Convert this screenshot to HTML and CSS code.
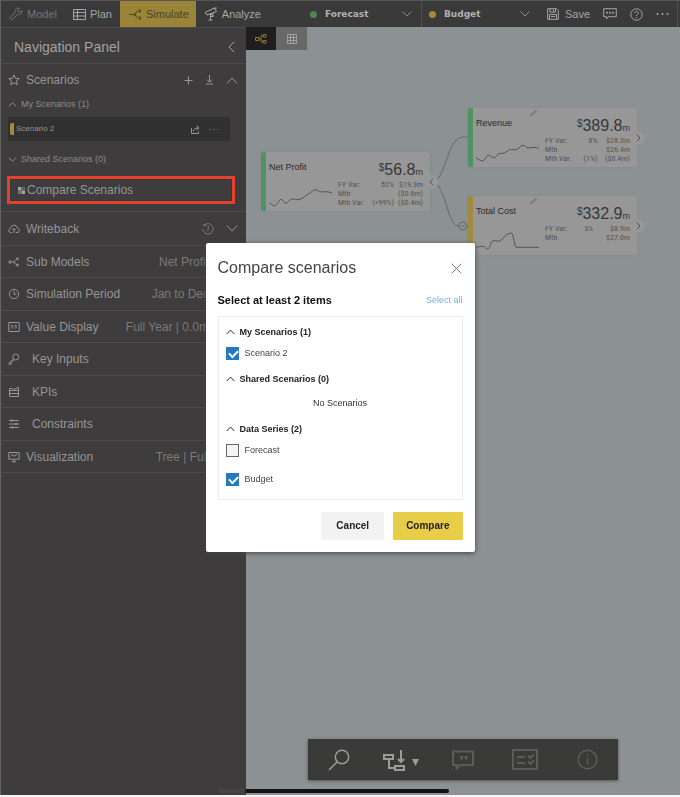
FILE: index.html
```html
<!DOCTYPE html>
<html lang="en">
<head>
<meta charset="utf-8">
<meta name="viewport" content="width=device-width, initial-scale=1">
<title>Compare scenarios</title>
<link rel="stylesheet" href="styles.css">
</head>
<body>
<div class="app">
  <header class="topbar">
    <nav class="modes">
      <button class="mode mode-muted"><svg class="icon" width="14" height="14" viewBox="0 0 14 14"><path d="M12.8 3.500 10.800 5.300 9 4.800 8.600 3.100 10.400 1.200C8.500.300 6.300 1.700 6.200 3.700c0 .6.1 1 .2 1.500L1.400 10c-1.200 1.200.9 3.500 2.300 2.200L8.600 7.500c2.700.8 4.800-1.500 4.200-4z"/></svg>Model</button>
      <button class="mode"><svg class="icon" width="13" height="13" viewBox="0 0 13 13"><path d="M.5 1.500h12v10H.5zM.5 4.500h12M.5 8h12M4.500 1.500v10"/></svg>Plan</button>
      <button class="mode mode-active"><svg class="icon" width="13" height="13" viewBox="0 0 13 13"><path d="M0 6.500h4.500M12 3H9.500C5.500 3 5.500 10 9.500 10H12M10 1l2 2-2 2M10 8l2 2-2 2"/><circle cx="5.500" cy="6.500" r="1"/></svg>Simulate</button>
      <button class="mode"><svg class="icon" width="14" height="14" viewBox="0 0 14 14"><path d="M1 5.500 10.500 1l2 3.500L3 8zM10 1.200l2.800-.2M6.500 7v6M4.500 13h4M6.500 6.500l3 3M9 6v3.500H6"/></svg>Analyze</button>
    </nav>
    <div class="series">
      <label class="pick"><span class="dot dot-green"></span>
        <select aria-label="Primary series"><option>Forecast</option></select>
        <svg class="icon" width="10" height="6" viewBox="0 0 10 6"><path d="m.5.5 4.500 4.500L9.500.500"/></svg></label>
      <label class="pick"><span class="dot dot-gold"></span>
        <select aria-label="Comparison series"><option>Budget</option></select>
        <svg class="icon" width="10" height="6" viewBox="0 0 10 6"><path d="m.5.5 4.500 4.500L9.500.500"/></svg></label>
    </div>
    <div class="tools">
      <button class="tool"><svg class="icon" width="12" height="12" viewBox="0 0 12 12"><path d="M.7.7h8.800l1.800 1.800v8.800H.7zM3 .7v3.500h5.500V.7M6.500 1.500v2M2.500 11.300V6.500h7v4.800M4 8.500h4"/></svg>Save</button>
      <button class="tool" aria-label="Comments"><svg class="icon" width="14" height="12" viewBox="0 0 14 12"><path d="M.7.7h12.600v8H5.500L3.500 11V8.700H.7z"/><path class="round-dots" d="M4 4.700h.01M7 4.700h.01M10 4.700h.01"/></svg></button>
      <button class="tool" aria-label="Help"><svg class="icon" width="13" height="13" viewBox="0 0 13 13"><circle cx="6.500" cy="6.500" r="5.700"/><path d="M4.700 5.200c0-2.400 3.700-2.200 3.600 0C8.300 6.500 6.500 6.400 6.500 8M6.500 9v1"/></svg></button>
      <button class="tool" aria-label="More"><svg class="icon" width="13" height="4" viewBox="0 0 13 4"><path class="round-dots" d="M1.500 2h.01M6.500 2h.01M11.500 2h.01"/></svg></button>
    </div>
  </header>

  <div class="workspace">
    <aside class="sidebar">
      <div class="panel-head">
        <h1>Navigation Panel</h1>
        <button aria-label="Collapse panel"><svg class="icon" width="7" height="12" viewBox="0 0 7 12"><path d="M6.200.8 1 6l5.200 5.200"/></svg></button>
      </div>

      <section class="scenarios">
        <div class="scenarios-head">
          <svg class="icon" width="12" height="12" viewBox="0 0 12 12"><path d="m6 .9 1.500 3.400 3.700.3-2.800 2.400.9 3.700L6 8.800l-3.300 1.900.9-3.700L.8 4.600l3.700-.3z"/></svg>
          <h2>Scenarios</h2>
          <button aria-label="Add scenario"><svg class="icon" width="9" height="9" viewBox="0 0 9 9"><path d="M4.500.5v8M.5 4.500h8"/></svg></button>
          <button aria-label="Import scenario"><svg class="icon" width="9" height="10" viewBox="0 0 9 10"><path d="M4.500 0v7M2 4.700l2.500 2.500L7 4.700M1 9h7"/></svg></button>
          <button aria-label="Collapse scenarios"><svg class="icon" width="12" height="7" viewBox="0 0 12 7"><path d="M1 6.300 6 1l5 5.300"/></svg></button>
        </div>
        <button class="group"><svg class="icon" width="9" height="5" viewBox="0 0 9 5"><path d="M.8 4.300 4.500.7l3.700 3.600"/></svg>My Scenarios (1)</button>
        <div class="scenario">
          <span class="scenario-name">Scenario 2</span>
          <button aria-label="Share"><svg class="icon" width="10" height="9" viewBox="0 0 10 9"><path d="M1.500 3v5.500h7V6.500M3.500 6.500C3.700 4 5 3 8 3M6.500.8 9 3 6.500 5.200"/></svg></button>
          <button aria-label="Scenario menu"><svg class="icon" width="10" height="3" viewBox="0 0 10 3"><path class="small-dots" d="M1 1.500h.01M5 1.500h.01M9 1.500h.01"/></svg></button>
        </div>
        <button class="group"><svg class="icon" width="9" height="5" viewBox="0 0 9 5"><path d="M.8.7l3.700 3.600L8.200.7"/></svg>Shared Scenarios (0)</button>
        <button class="compare-link"><svg width="7" height="7" viewBox="0 0 7 7"><path fill="#706e6e" d="M0 0h7v7H0z"/><path fill="#a5a3a3" d="M0 0h3v3H0zM4 4h3v3H4z"/><path stroke="#4b4949" d="M4 1.500h2"/></svg>Compare Scenarios</button>
      </section>

      <div class="writeback">
        <svg class="icon" width="12" height="10" viewBox="0 0 12 10"><path d="M4 8.500H3C0 8.500.2 4.600 2.600 4.500 3 .2 8.800.2 9.100 4c3 .3 2.800 4.500 0 4.500H8M6 9V4.500M4.500 6 6 4.500 7.500 6"/></svg>
        <h2>Writeback</h2>
        <button aria-label="History"><svg class="icon dim" width="12" height="12" viewBox="0 0 12 12"><path d="M2 2.500A5.200 5.200 0 1 1 .8 6M1.700.8 2 2.800l2-.3M6.300 3v3.500L4.500 8"/></svg></button>
        <button aria-label="Expand writeback"><svg class="icon" width="12" height="7" viewBox="0 0 12 7"><path d="M1 .7 6 6l5-5.300"/></svg></button>
      </div>

      <ul class="settings">
        <li><svg class="icon" width="12" height="12" viewBox="0 0 12 12"><path d="M3.500 6h2c2 0 1-3 4-3M5.500 6c2 0 1 3 4 3"/><circle cx="2" cy="6" r="1.200"/><circle cx="9.500" cy="2.700" r="1"/><circle cx="9.500" cy="9" r="1"/></svg><h2>Sub Models</h2><span>Net Profit</span></li>
        <li><svg class="icon" width="12" height="12" viewBox="0 0 12 12"><circle cx="6" cy="6" r="4.700"/><path d="M6 3v3.200h2.500"/></svg><h2>Simulation Period</h2><span>Jan to Dec</span></li>
        <li><svg class="icon" width="12" height="12" viewBox="0 0 12 12"><path d="M.8 1.500h10.400v9H.8zM3.200 4.500l.8-.5v3.500M7.200 4.500 8 4v3.500M6 4.500v.7M6 6.500v.7"/></svg><h2>Value Display</h2><span>Full Year | 0.0m</span></li>
        <li class="indented"><svg class="icon" width="12" height="12" viewBox="0 0 12 12"><circle cx="7.800" cy="4" r="3"/><path d="M5.500 6 1 10v1.300h2M6 6.800 3 9.800v1.500"/></svg><h2>Key Inputs</h2></li>
        <li class="indented"><svg class="icon" width="12" height="12" viewBox="0 0 12 12"><path d="M1.500 4.500h9v6h-9zM1.500 7.500h9M1.500 4.500v-2h3l1 1 5-2v3"/></svg><h2>KPIs</h2></li>
        <li class="indented"><svg class="icon" width="12" height="12" viewBox="0 0 12 12"><path d="M1 2.500h10M1 6h10M1 9.500h10M4 1.200v2.600M8 4.700v2.600M4.500 8.200v2.600"/></svg><h2>Constraints</h2></li>
        <li><svg class="icon" width="12" height="12" viewBox="0 0 12 12"><path d="M.8 1.500h10.400v6.700H.8zM4 10.700h4M6 8.200v2.500M2.500 5.500l2-2L6 5.300l3.500-2.200"/></svg><h2>Visualization</h2><span>Tree | Full</span></li>
      </ul>
    </aside>

    <main class="canvas">
      <div class="views">
        <button class="view view-on" aria-label="Tree view"><svg width="12" height="10" viewBox="0 0 12 10" fill="none" stroke="#8f7d30"><path d="M.5 3.500h3.500v3H.500zM8 .5h3v2.500H8zM8 6.500h3V9H8zM4 5h2M8 1.700H6v6h2"/></svg></button>
        <button class="view" aria-label="Grid view"><svg width="10" height="10" viewBox="0 0 10 10" fill="none" stroke="#a0a0a0"><path d="M.5.5h9v9h-9zM.5 3.500h9M.5 6.500h9M3.500.5v9M6.500.5v9"/></svg></button>
      </div>

      <svg class="links" width="60" height="110" viewBox="0 0 60 110" fill="none" stroke="#66696a"><path d="M8 54C20 41 20 10 36 10h8M8 56c12 14 12 43 23 43M39 99h4"/><circle cx="35" cy="99" r="4"/><path d="M33 99h4"/></svg>

      <article class="node node-profit">
        <div class="node-head"><h3>Net Profit</h3><p class="amount"><sup>$</sup>56.8<small>m</small></p></div>
        <div class="node-body">
          <svg class="spark" width="64" height="19" viewBox="0 0 64 19"><path d="M0 14.300C2 16 4 18 6 17.700S10 11.300 12 11.300 15 15.300 17 15.300 20 11.300 23 11 28 12 30 11.700 36 8 39 6.300 44 2 46 1.700 50 4 52 4 56 3.500 58 3.700 62 4.700 63 5"/></svg>
          <table>
            <tr><th>FY Var:</th><td>52%</td><td>$19.3m</td></tr>
            <tr><th>Mth</th><td></td><td>($0.6m)</td></tr>
            <tr><th>Mth Var:</th><td>(&gt;99%)</td><td>($0.4m)</td></tr>
          </table>
        </div>
        <button class="toggle" aria-label="Collapse Net Profit"><svg width="5" height="8" viewBox="0 0 5 8"><path d="M4 .8 1 4l3 3.200"/></svg></button>
      </article>

      <article class="node node-revenue">
        <svg class="pencil" width="9" height="8" viewBox="0 0 9 8"><path d="m1.500 6.500 6-5"/></svg>
        <div class="node-head"><h3>Revenue</h3><p class="amount"><sup>$</sup>389.8<small>m</small></p></div>
        <div class="node-body">
          <svg class="spark" width="64" height="19" viewBox="0 0 64 19"><path d="M0 14C2 15 5 17.300 7 17S10 11.500 12 11.300 16 13.700 18 13.700 21 10 23 9.700 26 9.500 28 9 32 6 34 5.700 39 6 41 5.300 45 1.300 47 1.300 50 4 52 4 57 3.300 59 3.300 62 4 63 4.700"/></svg>
          <table>
            <tr><th>FY Var:</th><td>8%</td><td>$28.3m</td></tr>
            <tr><th>Mth</th><td></td><td>$26.4m</td></tr>
            <tr><th>Mth Var:</th><td>(1%)</td><td>($0.4m)</td></tr>
          </table>
        </div>
        <button class="toggle" aria-label="Expand Revenue"><svg width="5" height="8" viewBox="0 0 5 8"><path d="m1 .8 3 3.200-3 3.200"/></svg></button>
      </article>

      <article class="node node-cost">
        <svg class="pencil" width="9" height="8" viewBox="0 0 9 8"><path d="m1.500 6.500 6-5"/></svg>
        <div class="node-head"><h3>Total Cost</h3><p class="amount"><sup>$</sup>332.9<small>m</small></p></div>
        <div class="node-body">
          <svg class="spark" width="64" height="19" viewBox="0 0 64 19"><path d="M0 15.300C2 15 5 14 7 14.300S10 17.300 12 17 15 9 17 8.700 22 9.500 24 9 29 3 31 2.300 35 .8 36 1.300 39 15.300 40 15.300H63"/></svg>
          <table>
            <tr><th>FY Var:</th><td>3%</td><td>$8.9m</td></tr>
            <tr><th>Mth</th><td></td><td>$27.0m</td></tr>
          </table>
        </div>
        <button class="toggle" aria-label="Expand Total Cost"><svg width="5" height="8" viewBox="0 0 5 8"><path d="m1 .8 3 3.200-3 3.200"/></svg></button>
      </article>

      <div class="dock">
        <button aria-label="Search"><svg class="thin" width="22" height="22" viewBox="0 0 22 22"><circle cx="14" cy="8" r="6.700"/><path d="M9.200 12.800 1 21"/></svg></button>
        <button aria-label="Insert node"><svg width="36" height="22" viewBox="0 0 36 22"><path d="M1 6h9v4H1zM12 17h9v4h-9zM6 10v9h6M18 1v12M15 10l3 3 3-3"/><path class="caret" d="M29 10h7l-3.500 7z"/></svg></button>
        <button class="off" aria-label="Quote"><svg width="22" height="20" viewBox="0 0 22 20"><path d="M1 1.500h20V15H8l-3.500 3.500V15H1z"/><path d="M8 7h2v1l-.8 1.500M12.500 7h2v1l-.8 1.500"/></svg></button>
        <button class="off" aria-label="Checklist"><svg width="26" height="21" viewBox="0 0 26 21"><path d="M1 1h24v19H1zM5 8h8M5 14h8M16 6.500l2.500 2.500L22 5.500M16 12.500l2.500 2.500L22 11.500"/></svg></button>
        <button class="off" aria-label="Information"><svg class="thin" width="21" height="21" viewBox="0 0 21 21"><circle cx="10.500" cy="10.500" r="9.300"/><path d="M10.500 9v6.500M10.500 5.500v1.500"/></svg></button>
      </div>
    </main>
  </div>
  <div class="home-bar"></div>
</div>

<div class="overlay">
  <form class="dialog" role="dialog" aria-labelledby="dialog-title">
    <div class="dialog-head">
      <h2 id="dialog-title">Compare scenarios</h2>
      <button type="button" aria-label="Close"><svg width="11" height="11" viewBox="0 0 11 11" fill="none" stroke="#777"><path d="m.7.7 9.600 9.600M10.300.7.700 10.300"/></svg></button>
    </div>
    <div class="dialog-sub"><strong>Select at least 2 items</strong><a href="#all">Select all</a></div>
    <div class="choices">
      <section>
        <button type="button" class="fold"><svg width="9" height="6" viewBox="0 0 9 6"><path d="M.8 5 4.500 1l3.700 4"/></svg>My Scenarios (1)</button>
        <label class="choice"><input type="checkbox" checked>Scenario 2</label>
      </section>
      <section>
        <button type="button" class="fold"><svg width="9" height="6" viewBox="0 0 9 6"><path d="M.8 5 4.500 1l3.700 4"/></svg>Shared Scenarios (0)</button>
        <p class="empty">No Scenarios</p>
      </section>
      <section>
        <button type="button" class="fold"><svg width="9" height="6" viewBox="0 0 9 6"><path d="M.8 5 4.500 1l3.700 4"/></svg>Data Series (2)</button>
        <label class="choice"><input type="checkbox">Forecast</label>
        <label class="choice"><input type="checkbox" checked>Budget</label>
      </section>
    </div>
    <div class="actions">
      <button type="button" class="btn">Cancel</button>
      <button type="submit" class="btn btn-primary">Compare</button>
    </div>
  </form>
</div>
</body>
</html>
```
FILE: styles.css
```css
* { box-sizing: border-box; }
body { margin: 0; background: #f4f4f4; font-family: "Liberation Sans", Arial, sans-serif; font-size: 12px; }
h1, h2, h3, p, ul { margin: 0; padding: 0; font-weight: 400; font-size: inherit; }
ul { list-style: none; }
button, select, input { margin: 0; padding: 0; border: 0; background: none; color: inherit; font: inherit; }
svg { display: block; flex: none; }
.icon { fill: none; stroke: currentColor; stroke-width: 1; }
.icon .round-dots { stroke-width: 2; stroke-linecap: round; }
.icon .small-dots { stroke-width: 1; stroke-linecap: round; }

.app { position: relative; display: flex; flex-direction: column; min-height: calc(100vh - 2px); border-top: 1px solid #555656; border-left: 1px solid #626363; }

/* Top bar */
.topbar { display: flex; height: 26px; background: #3b3a3a; color: #a5a5a5; font-size: 11px; }
.modes, .series, .tools { display: flex; align-items: stretch; }
.mode { display: flex; align-items: center; gap: 4px; padding: 0 8px; }
.mode-muted { color: #747373; }
.mode-active { padding: 0 7px 0 9px; background: #998438; color: #4a4326; }
.series { flex: 1; justify-content: flex-end; }
.pick { display: flex; align-items: center; gap: 8px; width: 118px; padding: 0 9px 0 7px; }
.pick + .pick { border-left: 1px solid #525151; }
.pick select { flex: 1; min-width: 0; appearance: none; color: #b0b0b0; font: bold 9px "DejaVu Sans", Verdana, sans-serif; }
.pick .icon { color: #8a8a8a; }
.dot { width: 7px; height: 7px; border-radius: 50%; }
.dot-green { background: #4f8351; }
.dot-gold { background: #a58a35; }
.tools { gap: 13px; margin-right: 2px; padding: 0 8px; border-right: 1px solid #525151; }
.tool { display: flex; align-items: center; gap: 6px; }

.workspace { display: flex; flex: 1; }

/* Navigation panel */
.sidebar { width: 245px; flex: none; background: #3e3c3c; color: #979595; font-size: 12px; }
.sidebar h2 { flex: 1; }
.panel-head { display: flex; align-items: center; justify-content: space-between; height: 37px; padding: 2px 11px 0 13px; border-top: 1px solid #4c4b4b; border-bottom: 1px solid #4c4b4b; font-size: 14px; color: #a3a1a1; }
.scenarios { padding: 8px 11px 7px 6px; border-bottom: 1px solid #4c4b4b; }
.scenarios-head { display: flex; align-items: center; gap: 12px; height: 16px; margin-right: -3px; padding-left: 1px; }
.scenarios-head h2 { margin-left: -6px; }
.group { display: flex; align-items: center; gap: 4px; height: 16px; margin-top: 8px; padding-left: 1px; font-size: 9px; color: #8c8a8a; }
.scenario { display: flex; align-items: center; gap: 9px; height: 24px; margin: 5px 5px 10px 1px; padding: 0 11px 0 2px; border-radius: 2px; background: #323131; font-size: 8px; }
.scenario-name { flex: 1; padding-left: 2px; border-left: 4px solid #a08c3a; border-radius: 2px; line-height: 12px; }
.compare-link { display: flex; align-items: center; gap: 2px; width: 100%; height: 28px; margin-top: 9px; padding-left: 8px; border: 3px solid #e8402a; outline: 1px solid #263c3d; outline-offset: -4px; font-size: 12px; }
.writeback { display: flex; align-items: center; gap: 12px; height: 34px; padding: 0 8px 0 7px; border-bottom: 1px solid #4c4b4b; }
.writeback h2 { margin-left: -6px; }
.dim { opacity: .7; }
.settings li { display: flex; align-items: center; gap: 6px; height: 32px; padding: 0 37px 0 7px; border-bottom: 1px solid #4c4b4b; }
.settings li:nth-child(even) { height: 33px; }
.settings .indented { gap: 12px; }
.settings span { color: #7b7979; }

/* Model canvas */
.canvas { position: relative; flex: 1; min-width: 0; background: #8c9193; }
.views { display: flex; }
.view { display: grid; place-items: center; width: 31px; height: 23px; background: #686868; }
.view-on { width: 30px; background: #1f1e1e; }
.links { position: absolute; left: 182px; top: 100px; }
.node { position: absolute; width: 169px; height: 59px; padding: 0 7px 0 3px; border-left: 5px solid #4f9263; border-radius: 3px; background: #979797; box-shadow: 0 0 2px #7d8081; color: #2b2b2b; }
.node-profit { left: 15px; top: 125px; }
.node-revenue { left: 222px; top: 81px; }
.node-cost { left: 222px; top: 169px; border-color: #a18c3e; }
.node-head { display: flex; justify-content: space-between; align-items: flex-start; height: 28px; }
.node h3 { padding-top: 9px; font-size: 9px; line-height: 12px; }
.amount { padding-top: 9px; font-size: 16px; line-height: 18px; color: #383838; }
.amount sup { font-size: 10px; line-height: 1; vertical-align: 4px; }
.amount small { font-size: 9px; }
.node-body { display: flex; justify-content: space-between; }
.spark { margin-top: 8px; fill: none; stroke: #555; }
.node table { width: 85px; align-self: flex-start; border-collapse: collapse; font-family: "Roboto Condensed", "Liberation Sans Narrow", Roboto, sans-serif; font-size: 8px; line-height: 9px; color: #555; white-space: nowrap; }
.node th, .node td { height: 9px; padding: 0; font-weight: 400; text-align: right; }
.node th { text-align: left; }
.toggle { position: absolute; top: 23px; right: -8px; display: grid; place-items: center; width: 14px; height: 14px; border-radius: 50%; background: #979797; }
.toggle svg { fill: none; stroke: #505050; }
.pencil { position: absolute; left: 56px; top: 1px; stroke: #7c7c7c; stroke-width: 2; }
.dock { position: absolute; bottom: 15px; left: 50%; display: flex; width: 310px; height: 41px; margin-left: -155px; background: #3a3a39; box-shadow: 0 1px 3px #555; }
.dock button { flex: 1; display: grid; place-items: center; color: #9c9c9c; }
.dock .off { color: #5b5b5a; }
.dock svg { fill: none; stroke: currentColor; stroke-width: 2; }
.dock .thin { stroke-width: 1.5; }
.dock .caret { fill: currentColor; stroke: none; }
.home-bar { position: absolute; left: 217px; bottom: 2px; width: 231px; height: 4px; border-radius: 2px; background: linear-gradient(to right, #454343 27px, #111 28px); }

/* Dialog */
.overlay { position: fixed; inset: 0 0 2px; display: grid; place-items: center; }
.dialog { width: 269px; padding: 13px 12px 12px; border-radius: 2px; background: #fff; box-shadow: 0 1px 5px #444; color: #333; font-size: 9px; line-height: 16px; }
.dialog-head, .dialog-sub { display: flex; align-items: center; justify-content: space-between; }
.dialog-head { height: 24px; margin-bottom: 12px; padding-right: 1px; font-size: 16px; color: #444; }
.dialog-sub { margin-bottom: 8px; font-size: 11px; color: #111; }
.dialog-sub a { color: #74b4d6; font-size: 9px; text-decoration: none; }
.choices { display: grid; gap: 10px; padding: 7px 7px 12px; border: 1px solid #ececec; }
.fold { display: flex; align-items: center; gap: 5px; height: 16px; font-weight: 700; color: #222; }
.fold svg { fill: none; stroke: #333; }
.choice { display: flex; align-items: center; gap: 6px; height: 16px; margin-top: 5px; color: #444; }
.choice + .choice { margin-top: 13px; }
.choice input { appearance: none; width: 13px; height: 13px; border: 1px solid #666; background: #f3f3f3; }
.choice input:checked { border-color: #2878c0; background: #2878c0; }
.choice input:checked::after { content: ""; display: block; width: 7px; height: 4px; margin: 2px 0 0 2px; border: solid #fff; border-width: 0 0 2px 2px; transform: rotate(-45deg); }
.empty { margin-top: 8px; text-align: center; }
.actions { display: flex; justify-content: flex-end; gap: 9px; margin-top: 12px; }
.btn { height: 28px; padding: 0 15px; background: #f2f2f2; font-size: 10px; font-weight: 700; color: #222; }
.btn-primary { padding: 0 13px; background: #e8cd48; }
```
